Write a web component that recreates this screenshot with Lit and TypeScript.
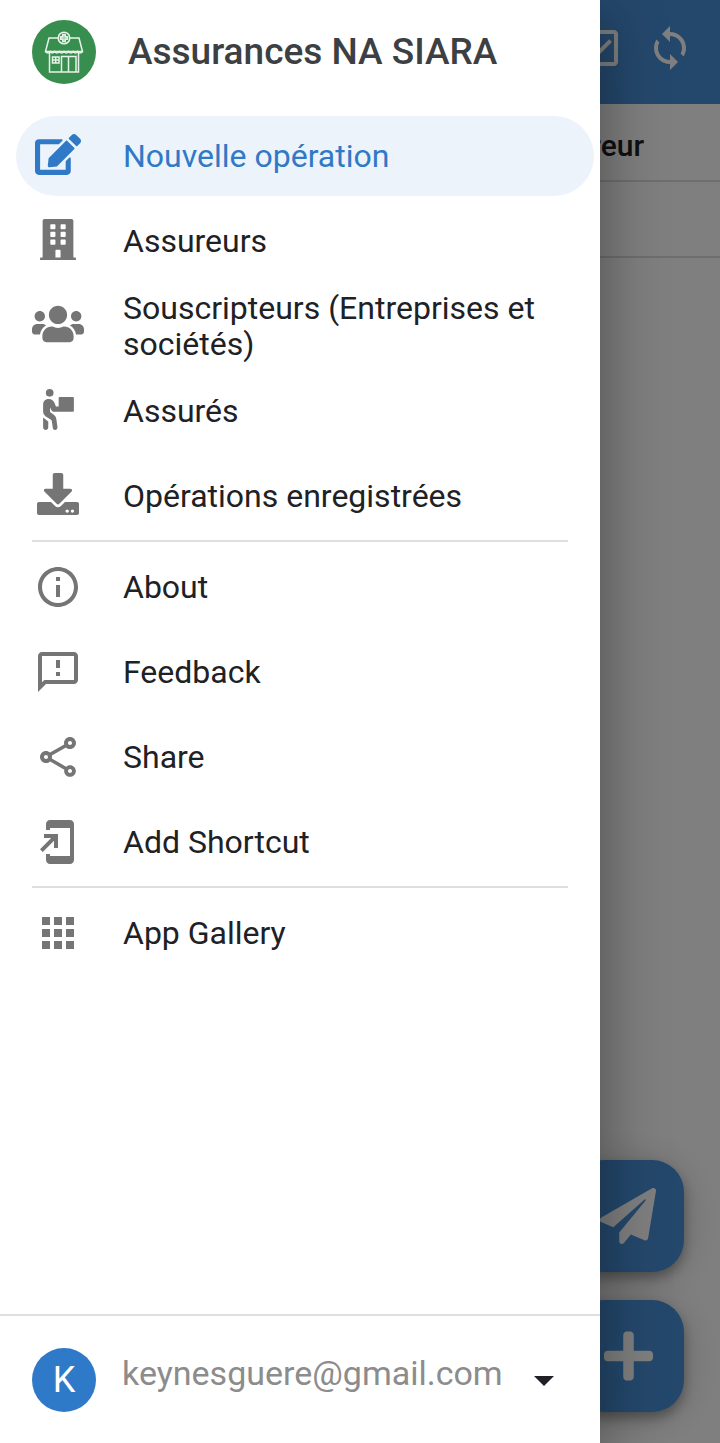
import { LitElement, html, css, svg } from "lit";
import { customElement, property } from "lit/decorators.js";

const glyphs: Record<string, { box: string; w: number; art: unknown }> = {
  edit: {
    box: "0 0 576 512", w: 46,
    art: svg`<path d="M402.6 83.2l90.2 90.2c3.8 3.8 3.8 10 0 13.8L274.4 405.6l-92.8 10.3c-12.4 1.4-22.9-9.1-21.5-21.5l10.3-92.8L388.8 83.2c3.8-3.8 10-3.8 13.8 0zm162-22.9l-48.8-48.8c-15.2-15.2-39.9-15.2-55.2 0l-35.4 35.4c-3.8 3.8-3.8 10 0 13.8l90.2 90.2c3.8 3.8 10 3.8 13.8 0l35.4-35.4c15.2-15.3 15.2-40 0-55.2zM384 346.2V448H64V128h229.8c3.2 0 6.2-1.3 8.5-3.5l40-40c7.6-7.6 2.2-20.5-8.5-20.5H48C21.5 64 0 85.5 0 112v352c0 26.5 21.5 48 48 48h352c26.5 0 48-21.5 48-48V306.2c0-10.7-12.9-16-20.5-8.5l-40 40c-2.2 2.3-3.5 5.3-3.5 8.5z"/>`,
  },
  building: {
    box: "0 0 448 512", w: 36,
    art: svg`<path d="M436 480h-20V24c0-13.3-10.7-24-24-24H56C42.7 0 32 10.7 32 24v456H12c-6.6 0-12 5.4-12 12v20h448v-20c0-6.6-5.4-12-12-12zM128 76c0-6.6 5.4-12 12-12h40c6.6 0 12 5.4 12 12v40c0 6.6-5.4 12-12 12h-40c-6.6 0-12-5.4-12-12V76zm0 96c0-6.6 5.4-12 12-12h40c6.6 0 12 5.4 12 12v40c0 6.6-5.4 12-12 12h-40c-6.6 0-12-5.4-12-12v-40zm52 148h-40c-6.6 0-12-5.4-12-12v-40c0-6.6 5.4-12 12-12h40c6.6 0 12 5.4 12 12v40c0 6.6-5.4 12-12 12zm76 160h-64v-84c0-6.6 5.4-12 12-12h40c6.6 0 12 5.4 12 12v84zm64-172c0 6.6-5.4 12-12 12h-40c-6.6 0-12-5.4-12-12v-40c0-6.6 5.4-12 12-12h40c6.6 0 12 5.4 12 12v40zm0-96c0 6.6-5.4 12-12 12h-40c-6.6 0-12-5.4-12-12v-40c0-6.6 5.4-12 12-12h40c6.6 0 12 5.4 12 12v40zm0-96c0 6.6-5.4 12-12 12h-40c-6.6 0-12-5.4-12-12V76c0-6.6 5.4-12 12-12h40c6.6 0 12 5.4 12 12v40z"/>`,
  },
  users: {
    box: "0 0 640 512", w: 52,
    art: svg`<path d="M96 224c35.3 0 64-28.7 64-64s-28.7-64-64-64-64 28.7-64 64 28.7 64 64 64zm448 0c35.3 0 64-28.7 64-64s-28.7-64-64-64-64 28.7-64 64 28.7 64 64 64zm32 32h-64c-17.6 0-33.5 7.1-45.1 18.6 40.3 22.1 68.9 62 75.1 109.4h66c17.7 0 32-14.3 32-32v-32c0-35.3-28.7-64-64-64zm-256 0c61.9 0 112-50.1 112-112S381.9 32 320 32 208 82.1 208 144s50.1 112 112 112zm76.8 32h-8.3c-20.8 10-43.9 16-68.5 16s-47.6-6-68.5-16h-8.3C179.6 288 128 339.6 128 403.2V432c0 26.5 21.5 48 48 48h288c26.5 0 48-21.5 48-48v-28.8c0-63.6-51.6-115.2-115.2-115.2zm-223.7-13.4C161.5 263.1 145.6 256 128 256H64c-35.3 0-64 28.7-64 64v32c0 17.7 14.3 32 32 32h65.900c6.3-47.4 34.9-87.3 75.2-109.4z"/>`,
  },
  carry: {
    box: "0 0 384 512", w: 31,
    art: svg`<circle cx="82" cy="48" r="48"/><path d="M0 192C0 150 28 124 70 124c36 0 54 14 70 46l20 48h34V111q0-12 12-12h166q12 0 12 12v162q0 12-12 12H130q-14 0-22-14L87 232v56l50 38q24 18 28 50l14 98c4 46-52 50-58 14l-12-86q-2-14-14-22L28 340Q0 318 0 284zM0 355l64 50v74c0 44-64 44-64 0z"/>`,
  },
  download: {
    box: "0 0 512 512", w: 42,
    art: svg`<path d="M216 0h80c13.3 0 24 10.7 24 24v168h87.7c17.8 0 26.7 21.5 14.1 34.1L269.7 378.3c-7.5 7.5-19.8 7.5-27.3 0L90.1 226.1c-12.6-12.6-3.7-34.1 14.1-34.1H192V24c0-13.3 10.7-24 24-24zm296 376v112c0 13.3-10.7 24-24 24H24c-13.3 0-24-10.7-24-24V376c0-13.3 10.7-24 24-24h146.700l49 49c20.1 20.1 52.5 20.1 72.6 0l49-49H488c13.3 0 24 10.7 24 24zm-124 88c0-11-9-20-20-20s-20 9-20 20 9 20 20 20 20-9 20-20zm64 0c0-11-9-20-20-20s-20 9-20 20 9 20 20 20 20-9 20-20z"/>`,
  },
  info: {
    box: "0 0 24 24", w: 48,
    art: svg`<path d="M11 7h2v2h-2zm0 4h2v6h-2zm1-9C6.480 2 2 6.480 2 12s4.480 10 10 10 10-4.480 10-10S17.520 2 12 2zm0 18c-4.410 0-8-3.590-8-8s3.590-8 8-8 8 3.590 8 8-3.590 8-8 8z"/>`,
  },
  feedback: {
    box: "0 0 24 24", w: 48,
    art: svg`<path d="M20 2H4c-1.100 0-2 .9-2 2v18l4-4h14c1.100 0 2-.9 2-2V4c0-1.100-.9-2-2-2zm0 14H5.170L4 17.170V4h16v12zm-9-4h2v2h-2zm0-6h2v4h-2z"/>`,
  },
  share: {
    box: "0 0 24 24", w: 48,
    art: svg`<path d="M18 16.080c-.76 0-1.440.3-1.960.77L8.910 12.700c.05-.23.09-.46.09-.7s-.04-.47-.09-.7l7.050-4.110c.54.5 1.250.81 2.040.81 1.660 0 3-1.340 3-3s-1.340-3-3-3-3 1.340-3 3c0 .24.04.47.09.7L8.040 9.810C7.500 9.310 6.790 9 6 9c-1.660 0-3 1.340-3 3s1.340 3 3 3c.79 0 1.500-.31 2.040-.81l7.120 4.160c-.05.21-.08.43-.08.65 0 1.610 1.310 2.920 2.920 2.920s2.920-1.310 2.920-2.920-1.310-2.920-2.920-2.920zM18 4c.55 0 1 .45 1 1s-.45 1-1 1-1-.45-1-1 .45-1 1-1zM6 13c-.55 0-1-.45-1-1s.45-1 1-1 1 .45 1 1-.45 1-1 1zm12 7.020c-.55 0-1-.45-1-1s.45-1 1-1 1 .45 1 1-.45 1-1 1z"/>`,
  },
  shortcut: {
    box: "0 0 24 24", w: 48,
    art: svg`<path d="M18 1.010L8 1c-1.100 0-2 .9-2 2v3h2V5h10v14H8v-1H6v3c0 1.100.9 2 2 2h10c1.100 0 2-.9 2-2V3c0-1.100-.9-1.990-2-1.990zM10 15h2V8H5v2h3.590L3 15.590 4.410 17 10 11.410V15z"/>`,
  },
  apps: {
    box: "0 0 24 24", w: 48,
    art: svg`<path d="M4 8h4V4H4v4zm6 12h4v-4h-4v4zm-6 0h4v-4H4v4zm0-6h4v-4H4v4zm6 0h4v-4h-4v4zm6-10v4h4V4h-4zm-6 4h4V4h-4v4zm6 6h4v-4h-4v4zm0 6h4v-4h-4v4z"/>`,
  },
  check: {
    box: "0 0 24 24", w: 48,
    art: svg`<path d="M19 3H5c-1.100 0-2 .9-2 2v14c0 1.100.9 2 2 2h14c1.100 0 2-.9 2-2V5c0-1.100-.9-2-2-2zm0 16H5V5h14v14zM17.990 9l-1.410-1.420-6.590 6.590-2.580-2.570-1.420 1.410 4 3.990z"/>`,
  },
  sync: {
    box: "0 0 24 24", w: 48,
    art: svg`<path d="M12 4V1L8 5l4 4V6c3.310 0 6 2.690 6 6 0 1.010-.25 1.970-.7 2.800l1.460 1.460C19.540 15.030 20 13.570 20 12c0-4.420-3.580-8-8-8zm0 14c-3.310 0-6-2.690-6-6 0-1.010.25-1.970.7-2.800L5.240 7.740C4.460 8.970 4 10.430 4 12c0 4.420 3.580 8 8 8v3l4-4-4-4v3z"/>`,
  },
  send: {
    box: "0 0 512 512", w: 56,
    art: svg`<path d="M476 3.200L12.500 270.600c-18.100 10.400-15.800 35.600 2.200 43.200L121 358.400l287.300-253.200c5.500-4.900 13.300 2.600 8.600 8.300L176 407v80.500c0 23.600 28.500 32.900 42.500 15.800L282 426l124.600 52.200c14.200 6 30.400-2.900 33-18.200l72-432C515 7.800 493.300-6.800 476 3.200z"/>`,
  },
  plus: {
    box: "0 0 448 512", w: 49,
    art: svg`<path d="M416 208H272V64c0-17.700-14.300-32-32-32h-32c-17.700 0-32 14.300-32 32v144H32c-17.700 0-32 14.300-32 32v32c0 17.700 14.300 32 32 32h144v144c0 17.700 14.300 32 32 32h32c17.700 0 32-14.300 32-32V304h144c17.700 0 32-14.300 32-32v-32c0-17.700-14.300-32-32-32z"/>`,
  },
  caret: {
    box: "0 0 24 24", w: 48,
    art: svg`<path d="M7 10l5 5 5-5z"/>`,
  },
};

@customElement("app-glyph")
export class AppGlyph extends LitElement {
  @property() name = "";
  static styles = css`
    :host { display: inline-flex; flex: none; }
    svg { display: block; fill: currentColor; }
  `;
  render() {
    const g = glyphs[this.name];
    const [, , bw, bh] = g.box.split(" ").map(Number);
    return html`<svg width=${g.w} height=${Math.round((g.w * bh) / bw)} viewBox=${g.box} aria-hidden="true">${g.art}</svg>`;
  }
}

const views = [
  ["edit", "Nouvelle opération"],
  ["building", "Assureurs"],
  ["users", "Souscripteurs (Entreprises et sociétés)"],
  ["carry", "Assurés"],
  ["download", "Opérations enregistrées"],
];
const tools = [
  ["info", "About"],
  ["feedback", "Feedback"],
  ["share", "Share"],
  ["shortcut", "Add Shortcut"],
];
const more = [["apps", "App Gallery"]];

@customElement("app-root")
export class AppRoot extends LitElement {
  static styles = css`
    :host {
      display: block;
      position: relative;
      min-height: 100vh;
      font-family: Roboto, "Noto Sans", sans-serif;
      color: #202124;
    }
    * { box-sizing: border-box; }
    button { font: inherit; color: inherit; border: 0; background: none; padding: 0; cursor: pointer; }

    .page { min-height: 100vh; background: #fff; }
    .bar {
      display: flex; align-items: center; justify-content: flex-end; gap: 22px;
      height: 104px; padding: 0 26px 8px 0;
      background: #4890d8; color: #fff;
    }
    .bar button { display: flex; }
    .grid { width: 100%; border-collapse: collapse; font-size: 30px; line-height: 36px; }
    .grid th, .grid td { height: 76px; padding: 8px 76px 0 32px; border-bottom: 2px solid #dadce0; text-align: right; }
    .grid th { font-weight: 500; height: 77px; }
    .fabs {
      position: absolute; right: 36px; bottom: 31px;
      display: flex; flex-direction: column; gap: 28px;
    }
    .fab {
      display: flex; align-items: center; justify-content: center;
      width: 112px; height: 112px; border-radius: 32px;
      background: #4890d8; color: #fff;
      box-shadow: 0 6px 12px rgba(0, 0, 0, 0.3), 0 4px 36px rgba(0, 0, 0, 0.2);
    }
    .scrim { position: absolute; inset: 0; background: rgba(0, 0, 0, 0.5); }

    .drawer {
      position: absolute; inset: 0 120px 0 0;
      display: flex; flex-direction: column;
      background: #fff;
      box-shadow: 0 16px 60px rgba(0, 0, 0, 0.4);
    }
    .brand { display: flex; align-items: center; gap: 32px; padding: 20px 32px 32px; }
    .logo { width: 64px; height: 64px; flex: none; }
    .brand h1 { margin: 0; font-size: 37px; line-height: 44px; font-weight: 500; color: #3c4043; }
    ul { list-style: none; margin: 0; padding: 0 6px 0 16px; display: flex; flex-direction: column; gap: 5px; }
    .item {
      display: flex; align-items: center; gap: 24px;
      min-height: 80px; padding: 0 32px 0 16px; border-radius: 40px;
      font-size: 32px; line-height: 36px; color: #202124; text-decoration: none;
    }
    .item .ico { display: flex; justify-content: center; flex: none; width: 52px; color: #757575; }
    .views .ico { padding-bottom: 4px; }
    .item .txt { padding-left: 15px; }
    .item.on { background: #ecf3fb; color: #3079c6; }
    .item.on .ico { color: #3079c6; }
    hr { margin: 4px 32px 5px; border: 0; height: 2px; background: #dfdfdf; }

    .account {
      display: flex; align-items: center; margin-top: auto; height: 129px;
      padding: 0 32px; border: 0; border-top: 2px solid #dfdfdf; text-align: left;
    }
    .avatar {
      display: flex; align-items: center; justify-content: center; flex: none;
      width: 64px; height: 64px; border-radius: 50%; background: #2f7ac8; color: #fff; font-size: 36px;
    }
    .mail { flex: 1; min-width: 0; padding: 0 0 14px 26px; font-size: 34px; line-height: 40px; color: #8c8c8c; }
  `;

  private list(rows: string[][], kind = "", active = "") {
    return html`<ul class=${kind}>
      ${rows.map(
        ([icon, label]) => html`<li>
          <a class="item ${label === active ? "on" : ""}" href="#${icon}">
            <span class="ico"><app-glyph name=${icon}></app-glyph></span>
            <span class="txt">${label}</span>
          </a>
        </li>`
      )}
    </ul>`;
  }

  render() {
    return html`
      <main class="page">
        <header class="bar">
          <button aria-label="Select"><app-glyph name="check"></app-glyph></button>
          <button aria-label="Sync"><app-glyph name="sync"></app-glyph></button>
        </header>
        <table class="grid">
          <thead><tr><th scope="col">Assureur</th></tr></thead>
          <tbody><tr><td></td></tr></tbody>
        </table>
        <div class="fabs">
          <button class="fab" aria-label="Send"><app-glyph name="send"></app-glyph></button>
          <button class="fab" aria-label="Add"><app-glyph name="plus"></app-glyph></button>
        </div>
      </main>
      <div class="scrim"></div>
      <aside class="drawer">
        <div class="brand">
          <svg class="logo" viewBox="0 0 64 64" aria-hidden="true" fill="none" stroke="#e6f4e8" stroke-width="1.5">
            <circle cx="32" cy="32" r="32" fill="#388e4e" stroke="none" />
            <path d="M26 18H17l-3.5 13.5h37L47 18h-9" />
            <path d="M13.5 31.500q2.300 3 4.600 0q2.300 3 4.600 0q2.300 3 4.600 0q2.300 3 4.700 0q2.300 3 4.600 0q2.300 3 4.600 0q2.300 3 4.600 0q2.300 3 4.700 0" />
            <path d="M17.500 33v19h29V33" />
            <path d="M29.500 52V36.500h14.500V52M36.500 36.500V52" />
            <path d="M20.500 37h6.500v6h-6.500zM23.700 37v6M20.500 40h6.500" />
            <circle cx="32" cy="18" r="5.800" fill="#388e4e" />
            <path d="M30.700 14.500h2.600v2.200h2.200v2.600h-2.200v2.200h-2.600v-2.200h-2.200v-2.600h2.200z" fill="#9ccba6" />
          </svg>
          <h1>Assurances NA SIARA</h1>
        </div>
        <nav>
          ${this.list(views, "views", "Nouvelle opération")}
          <hr />
          ${this.list(tools)}
          <hr />
          ${this.list(more)}
        </nav>
        <button class="account">
          <span class="avatar">K</span>
          <span class="mail">keynesguere@gmail.com</span>
          <app-glyph name="caret"></app-glyph>
        </button>
      </aside>
    `;
  }
}
